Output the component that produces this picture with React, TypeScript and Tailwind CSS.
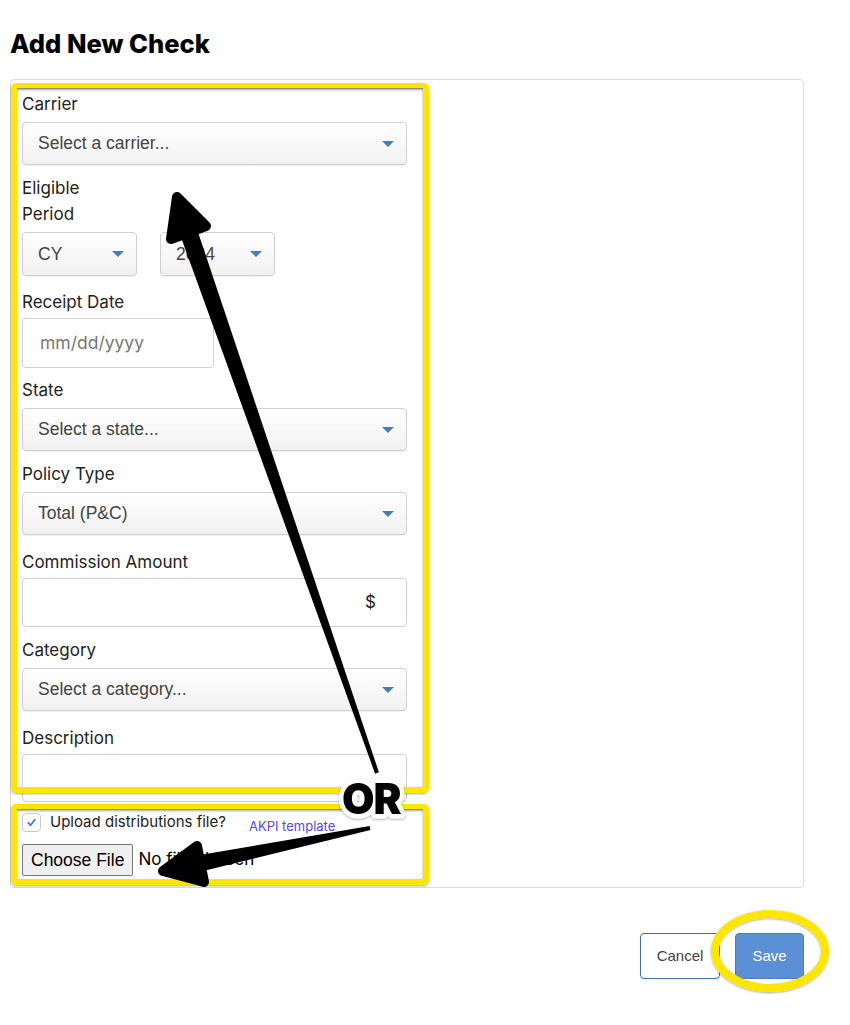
import React from 'react';

const labelCls = "block text-[17px] leading-[26px] text-[#222] font-['Inter',sans-serif]";

const Caret = () => (
  <span className="inline-block w-0 h-0 border-x-[6px] border-x-transparent border-t-[6px] border-t-[#4a7db5]" />
);

const FakeSelect = ({ text, className = '' }: { text: string; className?: string }) => (
  <div
    className={`flex items-center justify-between h-[43px] rounded-[4px] border border-[#cfcfcf] bg-linear-to-b from-white to-[#f1f1f1] shadow-[0_1px_1px_rgba(0,0,0,0.06)] pl-[15px] pr-[12px] ${className}`}
  >
    <span className="text-[17.5px] text-[#444] font-['Liberation_Sans',Arial,sans-serif]">{text}</span>
    <Caret />
  </div>
);

function Overlay() {
  return (
    <svg className="absolute inset-0 pointer-events-none" width="850" height="1025" viewBox="0 0 850 1025">
      <defs>
        <filter id="sh" x="-10%" y="-10%" width="120%" height="120%">
          <feDropShadow dx="0" dy="1" stdDeviation="1" floodColor="#000" floodOpacity="0.35" />
        </filter>
      </defs>
      {/* highlight boxes */}
      <g filter="url(#sh)">
        <rect x="14" y="86" width="412" height="704" rx="2" fill="none" stroke="#ffe600" strokeWidth="6" />
        <rect x="14" y="807" width="412" height="75" rx="2" fill="none" stroke="#ffe600" strokeWidth="6" />
        <ellipse cx="770" cy="951" rx="55" ry="37" fill="none" stroke="#ffe600" strokeWidth="8" />
      </g>
      <line x1="17" y1="88.5" x2="423" y2="88.5" stroke="#8a8a8a" strokeWidth="1" />
      <line x1="17" y1="809.5" x2="423" y2="809.5" stroke="#8a8a8a" strokeWidth="1" />

      {/* arrow to carrier */}
      <polygon points="193.4,218.4 176.3,224.3 375.1,773.7 378.9,772.3" fill="#000" />
      <polygon points="177,197 206,226 171,239" fill="#000" stroke="#000" strokeWidth="10" strokeLinejoin="round" />

      {/* arrow to file */}
      <polygon points="191,874 188,857 369.6,826 370.4,830" fill="#000" />
      <polygon points="163,871 197,846 204,882" fill="#000" stroke="#000" strokeWidth="10" strokeLinejoin="round" />

      <text
        x="342"
        y="814"
        fontFamily="Inter, 'Open Sans', sans-serif"
        fontWeight="900"
        fontSize="42"
        letterSpacing="-1"
        fill="#000"
        stroke="#fff"
        strokeWidth="9"
        strokeLinejoin="round"
        paintOrder="stroke"
        filter="url(#sh)"
      >
        OR
      </text>
    </svg>
  );
}

export default function App() {
  return (
    <div className="relative min-h-[1025px] bg-white">
      <div className="pl-[10px] pt-[28px]">
        <h1 className="text-[25.5px] leading-[32px] font-extrabold text-black font-['Inter',sans-serif] mb-[19px]">
          Add New Check
        </h1>

        <div className="w-[794px] rounded-[4px] border border-[#dcdcdc] pt-[11px] pb-[11px] pl-[11px]">
          <div className="w-[385px]">
            <label className={labelCls}>Carrier</label>
            <FakeSelect text="Select a carrier..." className="mt-[5px]" />

            <label className={`${labelCls} mt-[10px]`}>Eligible</label>
            <label className={labelCls}>Period</label>
            <div className="flex gap-[23px] mt-[5px]">
              <FakeSelect text="CY" className="w-[115px] h-[44px]" />
              <FakeSelect text="2024" className="w-[115px] h-[44px]" />
            </div>

            <label className={`${labelCls} mt-[13px]`}>Receipt Date</label>
            <div className="mt-[3px] h-[50px] w-[192px] rounded-[4px] border border-[#cfcfcf] flex items-center pl-[17px]">
              <span className="text-[17.5px] text-[#777] font-['Inter',sans-serif]">mm/dd/yyyy</span>
            </div>

            <label className={`${labelCls} mt-[9px]`}>State</label>
            <FakeSelect text="Select a state..." className="mt-[5px]" />

            <label className={`${labelCls} mt-[10px]`}>Policy Type</label>
            <FakeSelect text="Total (P&C)" className="mt-[5px]" />

            <label className={`${labelCls} mt-[14px]`}>Commission Amount</label>
            <div className="mt-[3px] h-[49px] rounded-[4px] border border-[#cfcfcf] flex items-center justify-end pr-[30px]">
              <span className="text-[17px] text-[#222] font-['Inter',sans-serif]">$</span>
            </div>

            <label className={`${labelCls} mt-[10px]`}>Category</label>
            <FakeSelect text="Select a category..." className="mt-[5px]" />

            <label className={`${labelCls} mt-[14px]`}>Description</label>
            <div className="mt-[3px] h-[48px] rounded-[4px] border border-[#cfcfcf]" />

            <div className="mt-[10px] h-[20px] flex items-center font-['Inter',sans-serif]">
              <span className="w-[19px] h-[19px] rounded-[4px] border border-[#c8c8c8] flex items-center justify-center">
                <svg width="11" height="11" viewBox="0 0 12 12">
                  <path d="M2.5 6.5 L5 9 L9.5 3" fill="none" stroke="#3b7dd8" strokeWidth="2" strokeLinecap="round" strokeLinejoin="round" />
                </svg>
              </span>
              <span className="ml-[9px] text-[15px] text-[#222]">Upload distributions file?</span>
              <span className="ml-[23px] mt-[10px] text-[13px] text-[#5546f0]">AKPI template</span>
            </div>

            <div className="mt-[12px] flex items-center">
              <span className="h-[32px] px-[8px] flex items-center rounded-[2px] border border-[#767676] bg-[#efefef] text-[17.5px] text-black font-['Liberation_Sans',Arial,sans-serif]">
                Choose File
              </span>
              <span className="ml-[5px] text-[17px] text-black font-['Inter',sans-serif]">No file chosen</span>
            </div>
          </div>
        </div>

        <div className="w-[794px] mt-[45px] flex justify-end gap-[15px] font-['Liberation_Sans',Arial,sans-serif]">
          <button className="h-[46px] w-[80px] rounded-[4px] border border-[#3d6db5] bg-white text-[15px] text-[#444]">
            Cancel
          </button>
          <button className="h-[46px] w-[69px] rounded-[4px] border border-[#4a7cc0] bg-[#5b8fd6] text-[15px] text-white">
            Save
          </button>
        </div>
      </div>
      <Overlay />
    </div>
  );
}
